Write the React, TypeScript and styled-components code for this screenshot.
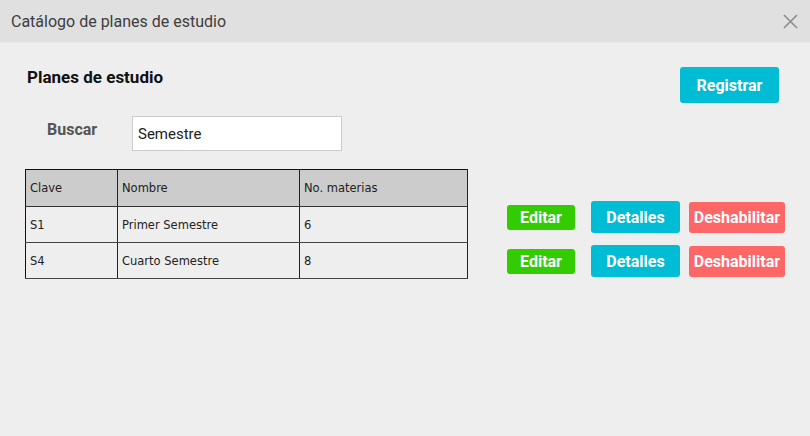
import React from "react";
import styled, { createGlobalStyle } from "styled-components";

const Global = createGlobalStyle`
  html, body { margin: 0; padding: 0; }
  body { background: #eeeeee; font-family: Roboto, "Liberation Sans", sans-serif; }
  * { box-sizing: border-box; }
`;

const Window = styled.div`
  width: 810px;
  height: 436px;
  background: #eeeeee;
  display: flex;
  flex-direction: column;
`;

const Header = styled.div`
  height: 43px;
  background: #e0e0e0;
  border-bottom: 1px solid #e9e9e9;
  display: flex;
  align-items: center;
  justify-content: space-between;
  padding: 0 12px 0 11px;
  flex-shrink: 0;
`;

const HeaderTitle = styled.div`
  font-size: 16px;
  color: #3d3d3d;
  margin-top: 1px;
`;

const Close = styled.button`
  border: none;
  background: transparent;
  padding: 0;
  width: 16px;
  height: 16px;
  display: flex;
  align-items: center;
  justify-content: center;
  margin-top: 1px;
`;

const Body = styled.div`
  padding: 24px 31px 0 25px;
  display: flex;
  flex-direction: column;
`;

const TopRow = styled.div`
  display: flex;
  justify-content: space-between;
  align-items: flex-start;
`;

const SectionTitle = styled.h2`
  margin: 0 0 0 2px;
  font-size: 17px;
  font-weight: 700;
  color: #111;
`;

const Button = styled.button<{ $bg: string; $w: number; $h: number }>`
  border: none;
  border-radius: 3px;
  background: ${(p) => p.$bg};
  color: #ffffff;
  font-family: Roboto, "Liberation Sans", sans-serif;
  font-weight: 700;
  font-size: 16px;
  width: ${(p) => p.$w}px;
  height: ${(p) => p.$h}px;
  padding: 0;
  display: flex;
  align-items: center;
  justify-content: center;
  flex-shrink: 0;
`;

const SearchRow = styled.div`
  display: flex;
  align-items: center;
  margin-top: 13px;
  padding-left: 22px;
`;

const SearchLabel = styled.label`
  font-size: 16px;
  font-weight: 700;
  color: #555555;
  width: 85px;
  margin-top: -9px;
`;

const SearchInput = styled.input`
  width: 210px;
  height: 35px;
  border: 1px solid #cccccc;
  background: #ffffff;
  font-family: Roboto, "Liberation Sans", sans-serif;
  font-size: 15px;
  color: #222;
  padding: 0 5px 0;
  outline: none;
`;

const DataRow = styled.div`
  display: flex;
  align-items: flex-start;
  margin-top: 18px;
`;

const Table = styled.table`
  border-collapse: collapse;
  border: 1px solid #111;
  width: 442px;
  font-family: "DejaVu Sans", "Liberation Sans", sans-serif;
  font-size: 11.5px;
  color: #222;
  table-layout: fixed;
`;

const HeadCell = styled.th<{ $w: number }>`
  width: ${(p) => p.$w}px;
  height: 37px;
  background: #cccccc;
  text-align: left;
  font-weight: 400;
  padding: 0 4px;
  border-right: 1px solid #222;
  border-bottom: 1px solid #333;
`;

const Cell = styled.td`
  height: 36px;
  padding: 0 4px;
  border-right: 1px solid #222;
  border-bottom: 1px solid #444;
`;

const Actions = styled.div`
  display: flex;
  flex-direction: column;
  gap: 12px;
  margin-left: 39px;
  margin-top: 32px;
`;

const ActionRow = styled.div`
  display: flex;
  align-items: center;
  height: 32px;
`;

const rows = [
  { clave: "S1", nombre: "Primer Semestre", materias: "6" },
  { clave: "S4", nombre: "Cuarto Semestre", materias: "8" },
];

export default function App() {
  return (
    <>
      <Global />
      <Window>
        <Header>
          <HeaderTitle>Catálogo de planes de estudio</HeaderTitle>
          <Close aria-label="Cerrar">
            <svg width="15" height="15" viewBox="0 0 15 15">
              <path d="M1 1 L14 14 M14 1 L1 14" stroke="#8c8c8c" strokeWidth="1.6" fill="none" />
            </svg>
          </Close>
        </Header>
        <Body>
          <TopRow>
            <SectionTitle>Planes de estudio</SectionTitle>
            <Button $bg="#00bcd4" $w={99} $h={36}>Registrar</Button>
          </TopRow>
          <SearchRow>
            <SearchLabel>Buscar</SearchLabel>
            <SearchInput defaultValue="Semestre" />
          </SearchRow>
          <DataRow>
            <Table>
              <thead>
                <tr>
                  <HeadCell $w={92}>Clave</HeadCell>
                  <HeadCell $w={182}>Nombre</HeadCell>
                  <HeadCell $w={168}>No. materias</HeadCell>
                </tr>
              </thead>
              <tbody>
                {rows.map((r) => (
                  <tr key={r.clave}>
                    <Cell>{r.clave}</Cell>
                    <Cell>{r.nombre}</Cell>
                    <Cell>{r.materias}</Cell>
                  </tr>
                ))}
              </tbody>
            </Table>
            <Actions>
              {rows.map((r) => (
                <ActionRow key={r.clave}>
                  <Button $bg="#33cc00" $w={68} $h={25}>Editar</Button>
                  <Button $bg="#00bcd4" $w={89} $h={32} style={{ marginLeft: 16 }}>Detalles</Button>
                  <Button $bg="#ff6666" $w={96} $h={31} style={{ marginLeft: 9 }}>Deshabilitar</Button>
                </ActionRow>
              ))}
            </Actions>
          </DataRow>
        </Body>
      </Window>
    </>
  );
}
